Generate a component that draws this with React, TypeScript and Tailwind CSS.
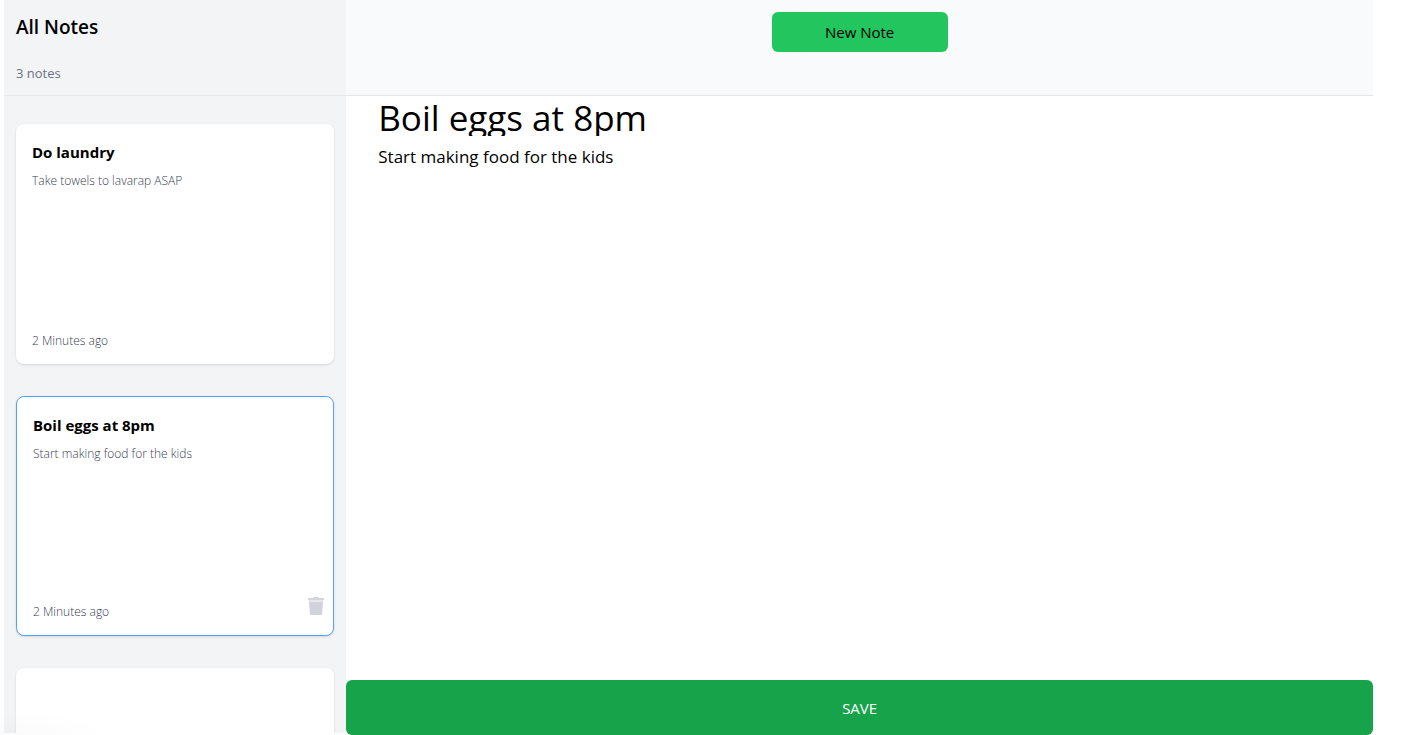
import { useState } from "react";

type Note = { id: number; title: string; body: string; age: string };

const initialNotes: Note[] = [
  { id: 1, title: "Do laundry", body: "Take towels to lavarap ASAP", age: "2 Minutes ago" },
  { id: 2, title: "Boil eggs at 8pm", body: "Start making food for the kids", age: "2 Minutes ago" },
  { id: 3, title: "", body: "", age: "" },
];

function TrashIcon() {
  return (
    <svg viewBox="0 0 16 18" className="h-[18px] w-4" aria-hidden="true">
      <path d="M5 1Q5 0 6 0H10Q11 0 11 1H15Q16 1 16 2V3H0V2Q0 1 1 1Z" fill="#d1d5db" />
      <path d="M1 3H15V5H1Z" fill="#e5e7eb" />
      <path d="M1 5H15L14 17Q14 18 13 18H3Q2 18 2 17Z" fill="#d0d3dc" />
    </svg>
  );
}

function NoteCard({ note, selected }: { note: Note; selected: boolean }) {
  return (
    <article
      className={
        selected
          ? "relative flex h-60 shrink-0 flex-col rounded-lg border border-blue-400 bg-white px-4 pt-4 pb-[15px] shadow-sm"
          : "relative flex h-60 shrink-0 flex-col rounded-lg bg-white px-4 pt-4 pb-[15px] shadow-sm"
      }
    >
      <h2 className="text-[15px] leading-6 font-bold">{note.title}</h2>
      <p className="mt-[9px] text-xs font-light text-gray-700">{note.body}</p>
      <p className="mt-auto text-xs font-light text-gray-700">{note.age}</p>
      {selected && (
        <button type="button" aria-label="Delete note" className="absolute right-[9px] bottom-5">
          <TrashIcon />
        </button>
      )}
    </article>
  );
}

export default function App() {
  const [title, setTitle] = useState("Boil eggs at 8pm");
  const [body, setBody] = useState("Start making food for the kids");

  return (
    <div className="relative flex h-screen flex-col overflow-hidden bg-white pr-[37px] pl-1 font-['Open_Sans','Noto_Sans',sans-serif] text-black">
      <header className="flex h-24 shrink-0 border-b border-gray-200">
        <div className="flex w-1/4 flex-col justify-between bg-gray-100 px-3 pt-[13px] pb-3">
          <h1 className="text-[19px] leading-7 font-semibold">All Notes</h1>
          <p className="text-[13px] leading-5 text-gray-500">{initialNotes.length} notes</p>
        </div>
        <div className="flex w-3/4 items-start justify-center bg-[#f9fafc] p-3">
          <button type="button" className="h-10 w-44 rounded-md bg-[#22c55e] text-[15px]">
            New Note
          </button>
        </div>
      </header>
      <div className="flex min-h-0 flex-1">
        <aside className="mb-0.5 flex w-1/4 flex-col gap-8 overflow-hidden bg-gray-100 px-3 pt-7">
          {initialNotes.map((note) => (
            <NoteCard key={note.id} note={note} selected={note.id === 2} />
          ))}
        </aside>
        <main className="flex w-3/4 flex-col">
          <input
            aria-label="Title"
            value={title}
            onChange={(e) => setTitle(e.target.value)}
            className="h-10 shrink-0 px-8 pt-1 text-[35px] leading-10 outline-none"
          />
          <textarea
            aria-label="Note"
            value={body}
            onChange={(e) => setBody(e.target.value)}
            className="mt-[7px] flex-1 resize-none px-8 text-[17px] leading-7 outline-none"
          />
          <button type="button" className="h-[55px] shrink-0 rounded-md bg-[#16a34a] pt-0.5 text-[15px] text-white">
            SAVE
          </button>
        </main>
      </div>
      <div className="pointer-events-none absolute bottom-0 left-0 h-6 w-28 bg-[radial-gradient(ellipse_at_bottom_left,rgba(0,0,0,0.02),transparent_70%)]" />
    </div>
  );
}
